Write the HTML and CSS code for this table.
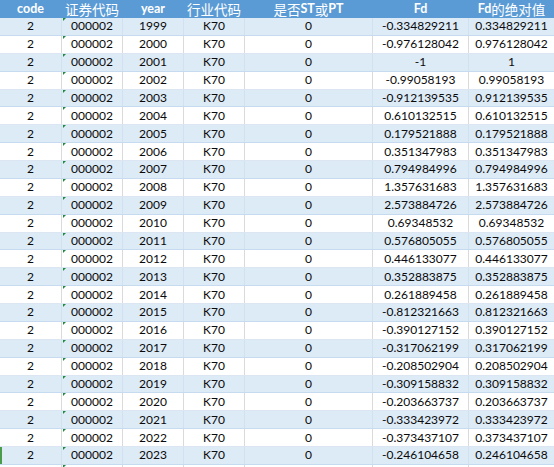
FILE: index.html
```html
<!DOCTYPE html>
<html>
<head>
<meta charset="utf-8">
<link rel="stylesheet" href="styles.css">
</head>
<body>
<div class="sheet">
  <div class="row head">
    <div class="c"><b>code</b></div>
    <div class="c cjk">证券代码</div>
    <div class="c"><b>year</b></div>
    <div class="c cjk">行业代码</div>
    <div class="c cjk">是否<b>ST</b>或<b>PT</b></div>
    <div class="c"><b>Fd</b></div>
    <div class="c cjk"><b>Fd</b>的绝对值</div>
  </div>
  <div class="row band"><div class="c">2</div><div class="c tx">000002</div><div class="c">1999</div><div class="c">K70</div><div class="c">0</div><div class="c fd">-0.334829211</div><div class="c">0.334829211</div></div>
  <div class="row"><div class="c">2</div><div class="c tx">000002</div><div class="c">2000</div><div class="c">K70</div><div class="c">0</div><div class="c fd">-0.976128042</div><div class="c">0.976128042</div></div>
  <div class="row band"><div class="c">2</div><div class="c tx">000002</div><div class="c">2001</div><div class="c">K70</div><div class="c">0</div><div class="c fd">-1</div><div class="c">1</div></div>
  <div class="row"><div class="c">2</div><div class="c tx">000002</div><div class="c">2002</div><div class="c">K70</div><div class="c">0</div><div class="c fd">-0.99058193</div><div class="c">0.99058193</div></div>
  <div class="row band"><div class="c">2</div><div class="c tx">000002</div><div class="c">2003</div><div class="c">K70</div><div class="c">0</div><div class="c fd">-0.912139535</div><div class="c">0.912139535</div></div>
  <div class="row"><div class="c">2</div><div class="c tx">000002</div><div class="c">2004</div><div class="c">K70</div><div class="c">0</div><div class="c fd">0.610132515</div><div class="c">0.610132515</div></div>
  <div class="row band"><div class="c">2</div><div class="c tx">000002</div><div class="c">2005</div><div class="c">K70</div><div class="c">0</div><div class="c fd">0.179521888</div><div class="c">0.179521888</div></div>
  <div class="row"><div class="c">2</div><div class="c tx">000002</div><div class="c">2006</div><div class="c">K70</div><div class="c">0</div><div class="c fd">0.351347983</div><div class="c">0.351347983</div></div>
  <div class="row band"><div class="c">2</div><div class="c tx">000002</div><div class="c">2007</div><div class="c">K70</div><div class="c">0</div><div class="c fd">0.794984996</div><div class="c">0.794984996</div></div>
  <div class="row"><div class="c">2</div><div class="c tx">000002</div><div class="c">2008</div><div class="c">K70</div><div class="c">0</div><div class="c fd">1.357631683</div><div class="c">1.357631683</div></div>
  <div class="row band"><div class="c">2</div><div class="c tx">000002</div><div class="c">2009</div><div class="c">K70</div><div class="c">0</div><div class="c fd">2.573884726</div><div class="c">2.573884726</div></div>
  <div class="row"><div class="c">2</div><div class="c tx">000002</div><div class="c">2010</div><div class="c">K70</div><div class="c">0</div><div class="c fd">0.69348532</div><div class="c">0.69348532</div></div>
  <div class="row band"><div class="c">2</div><div class="c tx">000002</div><div class="c">2011</div><div class="c">K70</div><div class="c">0</div><div class="c fd">0.576805055</div><div class="c">0.576805055</div></div>
  <div class="row"><div class="c">2</div><div class="c tx">000002</div><div class="c">2012</div><div class="c">K70</div><div class="c">0</div><div class="c fd">0.446133077</div><div class="c">0.446133077</div></div>
  <div class="row band"><div class="c">2</div><div class="c tx">000002</div><div class="c">2013</div><div class="c">K70</div><div class="c">0</div><div class="c fd">0.352883875</div><div class="c">0.352883875</div></div>
  <div class="row"><div class="c">2</div><div class="c tx">000002</div><div class="c">2014</div><div class="c">K70</div><div class="c">0</div><div class="c fd">0.261889458</div><div class="c">0.261889458</div></div>
  <div class="row band"><div class="c">2</div><div class="c tx">000002</div><div class="c">2015</div><div class="c">K70</div><div class="c">0</div><div class="c fd">-0.812321663</div><div class="c">0.812321663</div></div>
  <div class="row"><div class="c">2</div><div class="c tx">000002</div><div class="c">2016</div><div class="c">K70</div><div class="c">0</div><div class="c fd">-0.390127152</div><div class="c">0.390127152</div></div>
  <div class="row band"><div class="c">2</div><div class="c tx">000002</div><div class="c">2017</div><div class="c">K70</div><div class="c">0</div><div class="c fd">-0.317062199</div><div class="c">0.317062199</div></div>
  <div class="row"><div class="c">2</div><div class="c tx">000002</div><div class="c">2018</div><div class="c">K70</div><div class="c">0</div><div class="c fd">-0.208502904</div><div class="c">0.208502904</div></div>
  <div class="row band"><div class="c">2</div><div class="c tx">000002</div><div class="c">2019</div><div class="c">K70</div><div class="c">0</div><div class="c fd">-0.309158832</div><div class="c">0.309158832</div></div>
  <div class="row"><div class="c">2</div><div class="c tx">000002</div><div class="c">2020</div><div class="c">K70</div><div class="c">0</div><div class="c fd">-0.203663737</div><div class="c">0.203663737</div></div>
  <div class="row band"><div class="c">2</div><div class="c tx">000002</div><div class="c">2021</div><div class="c">K70</div><div class="c">0</div><div class="c fd">-0.333423972</div><div class="c">0.333423972</div></div>
  <div class="row"><div class="c">2</div><div class="c tx">000002</div><div class="c">2022</div><div class="c">K70</div><div class="c">0</div><div class="c fd">-0.373437107</div><div class="c">0.373437107</div></div>
  <div class="row band sel"><div class="c">2</div><div class="c tx">000002</div><div class="c">2023</div><div class="c">K70</div><div class="c">0</div><div class="c fd">-0.246104658</div><div class="c">0.246104658</div></div>
  <div class="row"><div class="c"></div><div class="c tx"></div><div class="c"></div><div class="c"></div><div class="c"></div><div class="c"></div><div class="c"></div></div>
</div>
</body>
</html>
```

FILE: styles.css
```css
html, body {
  margin: 0;
  padding: 0;
  background: #ffffff;
}
body {
  width: 554px;
  height: 467px;
  overflow: hidden;
  font-family: Lato, "Noto Sans CJK SC", sans-serif;
  font-size: 12px;
  color: #0a0a0a;
}
.sheet {
  display: flex;
  flex-direction: column;
}
.row {
  display: grid;
  grid-template-columns: 62px 61px 61px 61px 128px 96px 86px;
  height: 17.875px;
  flex: none;
  box-sizing: border-box;
  background: #ffffff;
  border-bottom: 1px solid #dbe6f2;
}
.row .c {
  position: relative;
  display: flex;
  align-items: center;
  justify-content: center;
  white-space: nowrap;
  box-sizing: border-box;
  border-right: 1px solid #dadada;
  line-height: 14px;
}
.row.band {
  background: #ddebf7;
  border-bottom: 1px solid #c6dbef;
}
.row.band .c {
  border-right-color: #d2e1f1;
}
.row.head {
  height: 18px;
  background: #5b9bd5;
  color: #ffffff;
  border-bottom: 0;
}
.row.head .c {
  border-right-color: #5b9bd5;
  font-size: 12.5px;
  line-height: 16px;
}
.row.head .cjk {
  font-family: "Noto Sans CJK SC", sans-serif;
  font-size: 13.5px;
  font-weight: 400;
}
.row.head .cjk b {
  font-family: Lato, sans-serif;
  font-weight: 700;
  font-size: 12.5px;
}
.row.head b {
  font-weight: 700;
}
.tx::before {
  content: "";
  position: absolute;
  left: 1px;
  top: 0;
  width: 0;
  height: 0;
  border-top: 3px solid #1f8a3c;
  border-right: 3px solid transparent;
}
.row.sel {
  box-shadow: inset 2px 0 0 #4a9b4a;
}
```
